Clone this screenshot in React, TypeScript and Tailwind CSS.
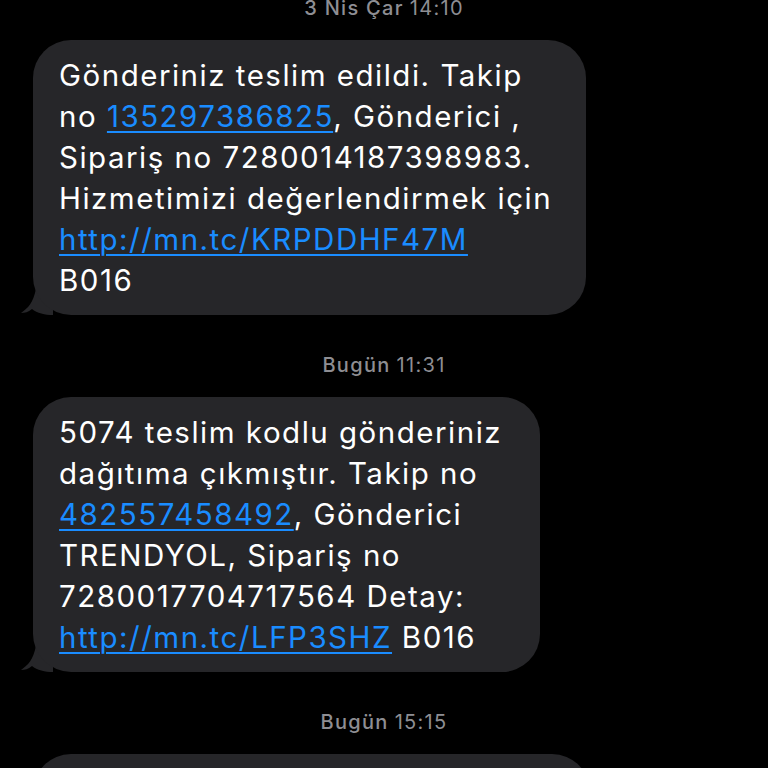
import React from "react";

type Part = { text: string; link?: boolean };

type Message = {
  stamp: [string, string];
  width: string;
  lines: Part[][];
};

const messages: Message[] = [
  {
    stamp: ["3 Nis Çar", "14:10"],
    width: "w-[553px]",
    lines: [
      [{ text: "Gönderiniz teslim edildi. Takip" }],
      [{ text: "no " }, { text: "135297386825", link: true }, { text: ", Gönderici ," }],
      [{ text: "Sipariş no 7280014187398983." }],
      [{ text: "Hizmetimizi değerlendirmek için" }],
      [{ text: "http://mn.tc/KRPDDHF47M", link: true }],
      [{ text: "B016" }],
    ],
  },
  {
    stamp: ["Bugün", "11:31"],
    width: "w-[507px]",
    lines: [
      [{ text: "5074 teslim kodlu gönderiniz" }],
      [{ text: "dağıtıma çıkmıştır. Takip no" }],
      [{ text: "482557458492", link: true }, { text: ", Gönderici" }],
      [{ text: "TRENDYOL, Sipariş no" }],
      [{ text: "7280017704717564 Detay:" }],
      [{ text: "http://mn.tc/LFP3SHZ", link: true }, { text: " B016" }],
    ],
  },
];

function Tail() {
  return (
    <svg
      className="absolute bottom-0 left-[-12px]"
      width="32"
      height="26"
      viewBox="0 0 32 26"
    >
      <path d="M15 0 L32 0 L32 26 C24 26 16 24 11 20 C7 23 4 24 0 24 C7 19 12 14 15 0 Z" fill="#262629" />
    </svg>
  );
}

function Stamp({ day, time }: { day: string; time: string }) {
  return (
    <div className="flex justify-center h-[22px] text-[20px] leading-[22px] tracking-[1.3px] text-[#8e8e93]">
      <span className="font-medium">{day}</span>
      <span className="ml-[6px]">{time}</span>
    </div>
  );
}

export default function App() {
  return (
    <main
      className="h-[768px] w-[768px] overflow-hidden bg-black px-[33px]"
      style={{ fontFamily: "Inter, 'Noto Sans', sans-serif" }}
    >
      <div className="-mt-[3px] flex flex-col">
        {messages.map((m, i) => (
          <div key={i} className={i > 0 ? "mt-[39px]" : ""}>
            <Stamp day={m.stamp[0]} time={m.stamp[1]} />
            <div className={`relative mt-[21px] ${m.width}`}>
              <div className="relative z-10 rounded-[38px] bg-[#262629] px-[26px] pt-[15px] pb-[14px] text-[29.5px] leading-[41px] tracking-[1.5px] text-white">
                {m.lines.map((line, j) => (
                  <div key={j} className="whitespace-nowrap">
                    {line.map((p, k) =>
                      p.link ? (
                        <a
                          key={k}
                          className="text-[#1a8cff] underline decoration-[1.5px] underline-offset-[4px]"
                        >
                          {p.text}
                        </a>
                      ) : (
                        <span key={k}>{p.text}</span>
                      )
                    )}
                  </div>
                ))}
              </div>
              <Tail />
            </div>
          </div>
        ))}
        <div className="mt-[39px]">
          <Stamp day="Bugün" time="15:15" />
          <div className="mt-[21px] h-[120px] w-[557px] rounded-[38px] bg-[#262629]" />
        </div>
      </div>
    </main>
  );
}
